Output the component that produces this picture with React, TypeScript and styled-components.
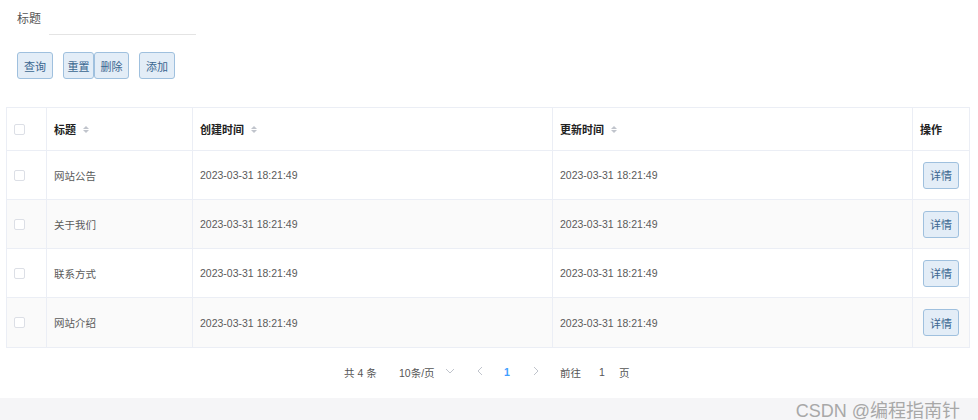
import React from 'react';
import styled, { createGlobalStyle } from 'styled-components';

const GlobalStyle = createGlobalStyle`
  html, body {
    margin: 0;
    padding: 0;
    background: #ffffff;
  }
  body {
    font-family: 'Liberation Sans', 'Noto Sans CJK SC', sans-serif;
    color: #606266;
  }
`;

const Page = styled.div`
  width: 978px;
  height: 420px;
  display: flex;
  flex-direction: column;
  overflow: hidden;
`;

const Content = styled.div`
  flex: 1;
  display: flex;
  flex-direction: column;
  padding: 0 8px 0 6px;
`;

const SearchRow = styled.div`
  display: flex;
  align-items: flex-start;
  height: 36px;
  padding: 12px 0 0 11px;
  box-sizing: border-box;
  margin-bottom: 16px;
`;

const Label = styled.span`
  font-size: 12px;
  line-height: 14px;
  color: #555;
  width: 32px;
`;

const Underline = styled.div`
  width: 147px;
  height: 22px;
  border-bottom: 1px solid #e4e4e4;
`;

const Toolbar = styled.div`
  display: flex;
  align-items: center;
  padding-left: 11px;
  height: 27px;
  margin-bottom: 28px;
`;

const ToolButton = styled.button<{ $gap?: number; $w?: number }>`
  height: 27px;
  width: ${(p) => p.$w ?? 36}px;
  margin-left: ${(p) => p.$gap ?? 0}px;
  padding: 0;
  font-family: inherit;
  font-size: 11px;
  color: #3a6690;
  background: #e3edf7;
  border: 1px solid #9fc0de;
  border-radius: 3px;
`;

const Table = styled.div`
  border: 1px solid #ebeef5;
  display: grid;
  grid-template-columns: 40px 146px 360px 360px 1fr;
`;

const Cell = styled.div<{ $head?: boolean; $stripe?: boolean; $last?: boolean; $bottom?: boolean }>`
  height: ${(p) => (p.$head ? 43 : 49)}px;
  box-sizing: border-box;
  display: flex;
  align-items: center;
  padding-left: 7px;
  font-size: ${(p) => (p.$head ? 11 : 10.5)}px;
  font-weight: ${(p) => (p.$head ? 700 : 400)};
  color: ${(p) => (p.$head ? '#222' : '#5a5a5a')};
  background: ${(p) => (p.$stripe ? '#fafafa' : '#ffffff')};
  border-right: ${(p) => (p.$last ? 'none' : '1px solid #ebeef5')};
  border-bottom: ${(p) => (p.$bottom ? 'none' : '1px solid #ebeef5')};
`;

const Check = styled.span`
  width: 9px;
  height: 9px;
  border: 1px solid #dcdfe6;
  border-radius: 2px;
  background: #fff;
`;

const SortIcon = styled.span`
  display: inline-flex;
  flex-direction: column;
  gap: 1px;
  margin-left: 7px;
  &::before,
  &::after {
    content: '';
    border-left: 3px solid transparent;
    border-right: 3px solid transparent;
  }
  &::before {
    border-bottom: 3px solid #c0c4cc;
  }
  &::after {
    border-top: 3px solid #c0c4cc;
  }
`;

const DetailButton = styled(ToolButton)`
  margin-left: 3px;
`;

const Pager = styled.div`
  display: flex;
  align-items: center;
  justify-content: flex-start;
  height: 48px;
  padding-left: 338px;
  font-size: 10.5px;
  color: #555;
`;

const PagerItem = styled.span<{ $w: number; $active?: boolean }>`
  width: ${(p) => p.$w}px;
  color: ${(p) => (p.$active ? '#409eff' : '#555')};
  font-weight: ${(p) => (p.$active ? 700 : 400)};
`;

const Footer = styled.div`
  height: 22px;
  background: #f5f5f7;
  display: flex;
  justify-content: flex-end;
  align-items: center;
  padding-right: 18px;
  font-size: 18px;
  color: #a8a8a8;
`;

const rows = ['网站公告', '关于我们', '联系方式', '网站介绍'];
const stamp = '2023-03-31 18:21:49';

const Chevron: React.FC<{ dir: 'left' | 'right' | 'down' }> = ({ dir }) => {
  const d = dir === 'left' ? 'M6 1 L2 5 L6 9' : dir === 'right' ? 'M2 1 L6 5 L2 9' : 'M1 3 L5 7 L9 3';
  return (
    <svg width="10" height="10" viewBox="0 0 10 10">
      <path d={d} fill="none" stroke="#c0c4cc" strokeWidth="1" />
    </svg>
  );
};

export default function App() {
  return (
    <Page>
      <GlobalStyle />
      <Content>
        <SearchRow>
          <Label>标题</Label>
          <Underline />
        </SearchRow>
        <Toolbar>
          <ToolButton>查询</ToolButton>
          <ToolButton $gap={10} $w={31}>重置</ToolButton>
          <ToolButton $w={35}>删除</ToolButton>
          <ToolButton $gap={10}>添加</ToolButton>
        </Toolbar>
        <Table>
          <Cell $head>
            <Check />
          </Cell>
          <Cell $head>
            标题<SortIcon />
          </Cell>
          <Cell $head>
            创建时间<SortIcon />
          </Cell>
          <Cell $head>
            更新时间<SortIcon />
          </Cell>
          <Cell $head $last>
            操作
          </Cell>
          {rows.map((title, i) => {
            const stripe = i % 2 === 1;
            const bottom = i === rows.length - 1;
            return (
              <React.Fragment key={title}>
                <Cell $stripe={stripe} $bottom={bottom}>
                  <Check />
                </Cell>
                <Cell $stripe={stripe} $bottom={bottom}>{title}</Cell>
                <Cell $stripe={stripe} $bottom={bottom}>{stamp}</Cell>
                <Cell $stripe={stripe} $bottom={bottom}>{stamp}</Cell>
                <Cell $stripe={stripe} $bottom={bottom} $last>
                  <DetailButton>详情</DetailButton>
                </Cell>
              </React.Fragment>
            );
          })}
        </Table>
        <Pager>
          <PagerItem $w={55}>共 4 条</PagerItem>
          <PagerItem $w={46}>10条/页</PagerItem>
          <PagerItem $w={31}>
            <Chevron dir="down" />
          </PagerItem>
          <PagerItem $w={28}>
            <Chevron dir="left" />
          </PagerItem>
          <PagerItem $w={28} $active>
            1
          </PagerItem>
          <PagerItem $w={28}>
            <Chevron dir="right" />
          </PagerItem>
          <PagerItem $w={39}>前往</PagerItem>
          <PagerItem $w={20}>1</PagerItem>
          <PagerItem $w={20}>页</PagerItem>
        </Pager>
      </Content>
      <Footer>CSDN @编程指南针</Footer>
    </Page>
  );
}
